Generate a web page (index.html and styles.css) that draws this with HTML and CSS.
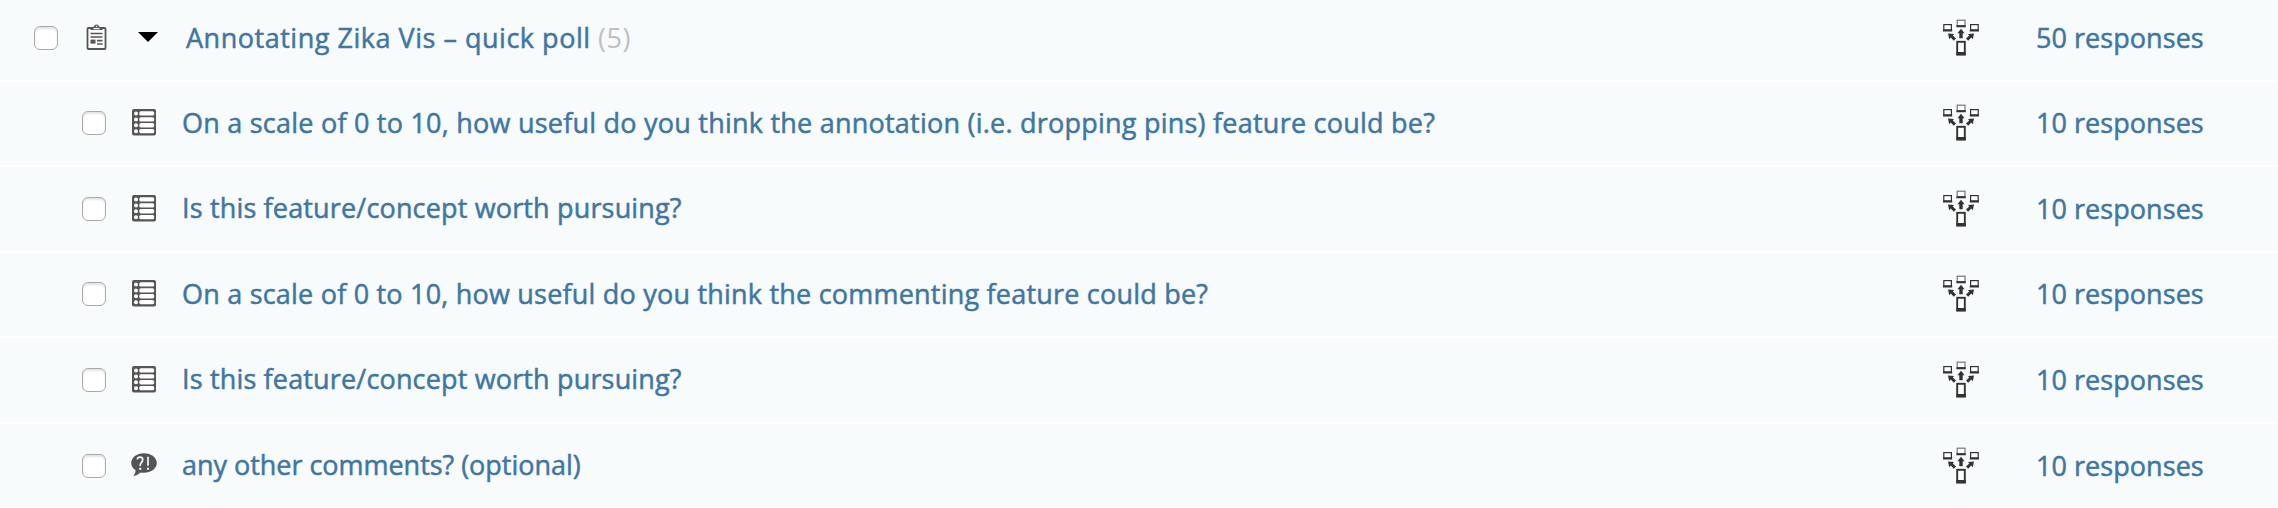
FILE: index.html
```html
<!DOCTYPE html>
<html lang="en">
<head>
<meta charset="utf-8">
<title>Polls</title>
<link rel="stylesheet" href="styles.css">
</head>
<body>
<svg class="defs" aria-hidden="true">
  <symbol id="clipboard" viewBox="0 0 22 28">
    <rect x="1.5" y="4" width="18" height="21" rx="1" fill="#fff" stroke="#555" stroke-width="1.8"/>
    <path d="M4.5 6V3H7.5L8.5 1.2Q10.5 -0.4 12.5 1.2L13.5 3H16.5V6Z" fill="#555"/>
    <path d="M7.5 4.7H13.5M10.5 1.8V3" stroke="#f7fbfc" stroke-width="1.3"/>
    <path d="M4.5 9.5H16.5M4.5 13H16.5M11 16.6H16.5M11 20H16.5" stroke="#555" stroke-width="1.6"/>
    <rect x="4.5" y="15.6" width="5" height="4" fill="#555"/>
  </symbol>
  <symbol id="list" viewBox="0 0 24 27">
    <rect width="24" height="26.5" rx="2" fill="#555"/>
    <g fill="#fff">
      <circle cx="4" cy="4.4" r="2"/><circle cx="4" cy="10.4" r="2"/><circle cx="4" cy="16.3" r="2"/><circle cx="4" cy="22.2" r="2"/>
      <rect x="7.3" y="2.2" width="14.9" height="4.3" rx="1.6"/><rect x="7.3" y="8.2" width="14.9" height="4.3" rx="1.6"/><rect x="7.3" y="14.1" width="14.9" height="4.3" rx="1.6"/><rect x="7.3" y="20" width="14.9" height="4.3" rx="1.6"/>
    </g>
  </symbol>
  <symbol id="bubble" viewBox="0 0 26 24">
    <path d="M13 0.2C20.2 0.2 25.8 4.5 25.8 10S20.2 19.7 13 19.7Q11.3 19.7 9.8 19.4Q6.5 22 2.3 23.3Q4.7 20.5 4.6 17.3Q0.2 14.5 0.2 10C0.2 4.5 5.8 0.2 13 0.2Z" fill="#555"/>
    <path d="M6.3 6.4Q6.5 4.2 9 4.2Q11.7 4.2 11.7 6.6Q11.7 8.4 10.3 9.7Q9.2 10.8 9.2 13M17 3.7V12.7" fill="none" stroke="#f7fbfc" stroke-width="1.7"/>
    <path d="M8.2 14.8H10.3V16.8H8.2ZM16 14.8H18V16.8H16Z" fill="#f7fbfc"/>
  </symbol>
  <symbol id="devices" viewBox="0 0 38 38">
    <g fill="#fff" stroke="#333" stroke-width="1.2">
      <rect x="1.8" y="5.6" width="7.6" height="5.4"/><rect x="15.2" y="1.2" width="7.8" height="5.4" stroke="#777"/><rect x="28.6" y="5.6" width="7.6" height="5.4"/>
      <rect x="15.2" y="22.8" width="7.6" height="12.4" stroke-width="1.9"/>
    </g>
    <path d="M1 10.6H10.2V12.6H1ZM14.4 6.2H23.8V8.2H14.4ZM27.8 10.6H37V12.6H27.8ZM14.3 33H23.8V36.4H14.3Z" fill="#333"/>
    <path d="M19 9.8L22.6 14.2H20.7V19.2H17.3V14.2H15.4Z" fill="#333"/>
    <path d="M6 14.4L12 14.9L10.8 16.5L14 19.4L11.8 21.8L8.8 18.6L7.2 20.2ZM32 14.4L26 14.9L27.2 16.5L24 19.4L26.2 21.8L29.2 18.6L30.8 20.2Z" fill="#333"/>
  </symbol>
</svg>
<main class="list">
  <div class="row group"><span class="check"></span><svg class="icon clipboard"><use href="#clipboard"/></svg><svg class="caret" viewBox="0 0 20 10"><path d="M0 0H20L10 10Z"/></svg><a class="title t1">Annotating Zika Vis – quick poll <span class="count">(5)</span></a><svg class="devices"><use href="#devices"/></svg><a class="responses">50 responses</a></div>
  <div class="row"><span class="check"></span><svg class="icon"><use href="#list"/></svg><a class="title">On a scale of 0 to 10, how useful do you think the annotation (i.e. dropping pins) feature could be?</a><svg class="devices"><use href="#devices"/></svg><a class="responses">10 responses</a></div>
  <div class="row tall"><span class="check"></span><svg class="icon"><use href="#list"/></svg><a class="title t3">Is this feature/concept worth pursuing?</a><svg class="devices"><use href="#devices"/></svg><a class="responses">10 responses</a></div>
  <div class="row"><span class="check"></span><svg class="icon"><use href="#list"/></svg><a class="title t4">On a scale of 0 to 10, how useful do you think the commenting feature could be?</a><svg class="devices"><use href="#devices"/></svg><a class="responses">10 responses</a></div>
  <div class="row tall"><span class="check"></span><svg class="icon"><use href="#list"/></svg><a class="title t3">Is this feature/concept worth pursuing?</a><svg class="devices"><use href="#devices"/></svg><a class="responses">10 responses</a></div>
  <div class="row last"><span class="check"></span><svg class="icon bubble"><use href="#bubble"/></svg><a class="title t6">any other comments? (optional)</a><svg class="devices"><use href="#devices"/></svg><a class="responses">10 responses</a></div>
</main>
</body>
</html>
```
FILE: styles.css
```css
* { box-sizing: border-box; }
body { margin: 0; background: #fff; font-family: "Open Sans", "Noto Sans", sans-serif; font-size: 27px; font-weight: 500; color: #3f76a2; }
.defs { display: block; width: 0; height: 0; }
.list { height: 508px; overflow: hidden; }
.row { display: flex; align-items: flex-start; height: 85px; padding: 29px 0 0 82px; background: #f7fbfc; border-bottom: 2px solid #fff; }
.row.tall { height: 86px; padding-top: 30px; }
.row.last { padding-top: 30px; }
.row.group { height: 82px; padding: 26px 0 0 34px; }
.check { flex: none; width: 24px; height: 24px; border: 1px solid #aaa; border-radius: 6px; background: #fff; box-shadow: inset 0 2px 2px #e4e4e4; }
.icon { flex: none; width: 24px; height: 27px; margin: -2px 0 0 26px; }
.icon.clipboard { width: 22px; height: 28px; margin: -2px 0 0 28px; }
.icon.bubble { width: 26px; height: 24px; margin: -1px 0 0 25px; }
.caret { flex: none; width: 20px; height: 10px; margin: 6px 0 0 30px; }
.title, .responses { white-space: nowrap; line-height: 36px; -webkit-text-stroke: 0.5px currentColor; }
.title { flex: 1; margin: -6px 0 0 26px; letter-spacing: 0.23px; }
.tall .title, .last .title { margin-top: -7px; }
.t1 { margin-left: 28px; letter-spacing: 0.52px; }
.t3 { letter-spacing: 0.16px; }
.t4 { letter-spacing: 0.21px; }
.t6 { margin-left: 25px; letter-spacing: -0.03px; }
.count { color: #c0c0c0; font-weight: 400; -webkit-text-stroke: 0; }
.devices { flex: none; width: 38px; height: 38px; margin: -7px -1px 0 1px; }
.responses { width: 242px; flex: none; margin: -6px 0 0 57px; letter-spacing: 0.05px; }
```
